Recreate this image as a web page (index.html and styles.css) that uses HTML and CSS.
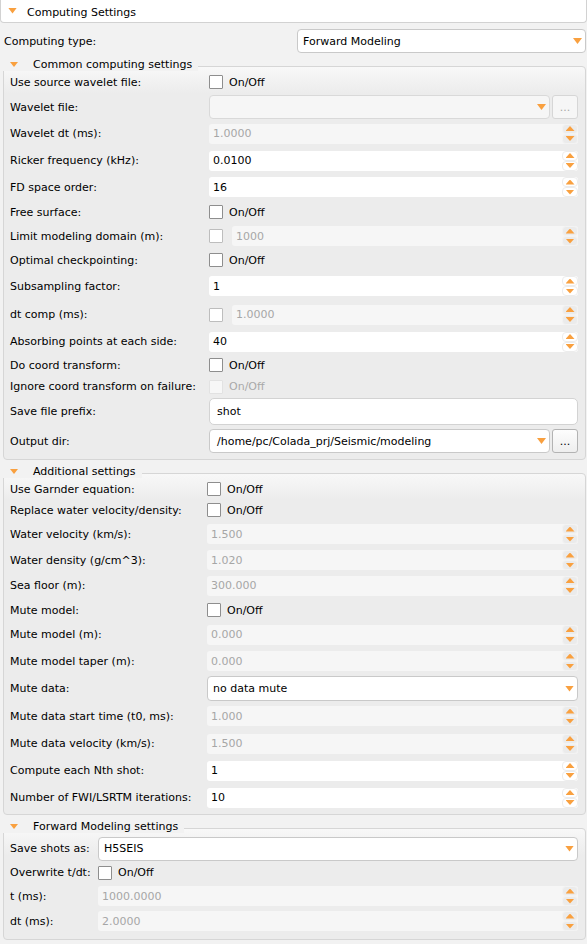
FILE: index.html
```html
<!DOCTYPE html>
<html>
<head>
<meta charset="utf-8">
<title>Computing Settings</title>
<link rel="stylesheet" href="styles.css">
</head>
<body>
<div class="page">
  <div class="header"><span class="tri-h"></span><span class="htext">Computing Settings</span></div>

  <div class="toprow">
    <span class="toplbl">Computing type:</span>
    <div class="combo"><span>Forward Modeling</span></div>
  </div>

  <section class="gbox g-common">
    <div class="gtitle"><span class="tri-g"></span><span>Common computing settings</span></div>
    <div class="rows">
      <div class="row h24"><span class="lbl">Use source wavelet file:</span><div class="fld"><span class="chk"></span><span class="onoff">On/Off</span></div></div>
      <div class="row h26"><span class="lbl">Wavelet file:</span><div class="fld"><div class="combo dis"><span></span></div><div class="btn dis">...</div></div></div>
      <div class="row h27"><span class="lbl">Wavelet dt (ms):</span><div class="fld"><div class="spin dis"><span>1.0000</span><div class="sbs"><i class="sb up"></i><i class="sb dn"></i></div></div></div></div>
      <div class="row h27"><span class="lbl">Ricker frequency (kHz):</span><div class="fld"><div class="spin"><span>0.0100</span><div class="sbs"><i class="sb up"></i><i class="sb dn"></i></div></div></div></div>
      <div class="row h26"><span class="lbl">FD space order:</span><div class="fld"><div class="spin"><span>16</span><div class="sbs"><i class="sb up"></i><i class="sb dn"></i></div></div></div></div>
      <div class="row h24"><span class="lbl">Free surface:</span><div class="fld"><span class="chk"></span><span class="onoff">On/Off</span></div></div>
      <div class="row h24"><span class="lbl">Limit modeling domain (m):</span><div class="fld"><span class="chk dim"></span><div class="spin dis after-chk"><span>1000</span><div class="sbs"><i class="sb up"></i><i class="sb dn"></i></div></div></div></div>
      <div class="row h24"><span class="lbl">Optimal checkpointing:</span><div class="fld"><span class="chk"></span><span class="onoff">On/Off</span></div></div>
      <div class="row h28"><span class="lbl">Subsampling factor:</span><div class="fld"><div class="spin"><span>1</span><div class="sbs"><i class="sb up"></i><i class="sb dn"></i></div></div></div></div>
      <div class="row h29"><span class="lbl">dt comp (ms):</span><div class="fld"><span class="chk dim"></span><div class="spin dis after-chk"><span>1.0000</span><div class="sbs"><i class="sb up"></i><i class="sb dn"></i></div></div></div></div>
      <div class="row h25"><span class="lbl">Absorbing points at each side:</span><div class="fld"><div class="spin"><span>40</span><div class="sbs"><i class="sb up"></i><i class="sb dn"></i></div></div></div></div>
      <div class="row h22"><span class="lbl">Do coord transform:</span><div class="fld"><span class="chk"></span><span class="onoff">On/Off</span></div></div>
      <div class="row h21"><span class="lbl">Ignore coord transform on failure:</span><div class="fld"><span class="chk off"></span><span class="onoff off">On/Off</span></div></div>
      <div class="row h29"><span class="lbl">Save file prefix:</span><div class="fld"><div class="edit"><span>shot</span></div></div></div>
      <div class="row h30"><span class="lbl">Output dir:</span><div class="fld"><div class="combo path"><span>/home/pc/Colada_prj/Seismic/modeling</span></div><div class="btn">...</div></div></div>
    </div>
  </section>

  <section class="gbox g-add">
    <div class="gtitle"><span class="tri-g"></span><span>Additional settings</span></div>
    <div class="rows">
      <div class="row h20"><span class="lbl">Use Garnder equation:</span><div class="fld"><span class="chk"></span><span class="onoff">On/Off</span></div></div>
      <div class="row h22"><span class="lbl">Replace water velocity/density:</span><div class="fld"><span class="chk"></span><span class="onoff">On/Off</span></div></div>
      <div class="row h26"><span class="lbl">Water velocity (km/s):</span><div class="fld"><div class="spin dis"><span>1.500</span><div class="sbs"><i class="sb up"></i><i class="sb dn"></i></div></div></div></div>
      <div class="row h26"><span class="lbl">Water density (g/cm^3):</span><div class="fld"><div class="spin dis"><span>1.020</span><div class="sbs"><i class="sb up"></i><i class="sb dn"></i></div></div></div></div>
      <div class="row h25"><span class="lbl">Sea floor (m):</span><div class="fld"><div class="spin dis"><span>300.000</span><div class="sbs"><i class="sb up"></i><i class="sb dn"></i></div></div></div></div>
      <div class="row h24"><span class="lbl">Mute model:</span><div class="fld"><span class="chk"></span><span class="onoff">On/Off</span></div></div>
      <div class="row h25"><span class="lbl">Mute model (m):</span><div class="fld"><div class="spin dis"><span>0.000</span><div class="sbs"><i class="sb up"></i><i class="sb dn"></i></div></div></div></div>
      <div class="row h28"><span class="lbl">Mute model taper (m):</span><div class="fld"><div class="spin dis"><span>0.000</span><div class="sbs"><i class="sb up"></i><i class="sb dn"></i></div></div></div></div>
      <div class="row h27"><span class="lbl">Mute data:</span><div class="fld"><div class="combo tall"><span>no data mute</span></div></div></div>
      <div class="row h28"><span class="lbl">Mute data start time (t0, ms):</span><div class="fld"><div class="spin dis"><span>1.000</span><div class="sbs"><i class="sb up"></i><i class="sb dn"></i></div></div></div></div>
      <div class="row h27"><span class="lbl">Mute data velocity (km/s):</span><div class="fld"><div class="spin dis"><span>1.500</span><div class="sbs"><i class="sb up"></i><i class="sb dn"></i></div></div></div></div>
      <div class="row h27"><span class="lbl">Compute each Nth shot:</span><div class="fld"><div class="spin"><span>1</span><div class="sbs"><i class="sb up"></i><i class="sb dn"></i></div></div></div></div>
      <div class="row h27"><span class="lbl">Number of FWI/LSRTM iterations:</span><div class="fld"><div class="spin"><span>10</span><div class="sbs"><i class="sb up"></i><i class="sb dn"></i></div></div></div></div>
    </div>
  </section>

  <section class="gbox g-fwd">
    <div class="gtitle"><span class="tri-g"></span><span>Forward Modeling settings</span></div>
    <div class="rows">
      <div class="row h25"><span class="lbl">Save shots as:</span><div class="fld"><div class="combo"><span>H5SEIS</span></div></div></div>
      <div class="row h23"><span class="lbl">Overwrite t/dt:</span><div class="fld"><span class="chk"></span><span class="onoff">On/Off</span></div></div>
      <div class="row h24"><span class="lbl">t (ms):</span><div class="fld"><div class="spin dis"><span>1000.0000</span><div class="sbs"><i class="sb up"></i><i class="sb dn"></i></div></div></div></div>
      <div class="row h26"><span class="lbl">dt (ms):</span><div class="fld"><div class="spin dis"><span>2.0000</span><div class="sbs"><i class="sb up"></i><i class="sb dn"></i></div></div></div></div>
    </div>
  </section>
</div>
</body>
</html>
```

FILE: styles.css
```css
html, body {
  margin: 0;
  padding: 0;
}
body {
  background: #f2f2f2;
  font-family: "DejaVu Sans", "Liberation Sans", sans-serif;
  font-size: 11px;
  color: #000;
  width: 587px;
  height: 944px;
  overflow: hidden;
}
.page {
  width: 587px;
}

/* header */
.header {
  height: 22px;
  box-sizing: content-box;
  background: #fff;
  border: 1px solid #d2d2d2;
  border-top: none;
  border-radius: 0 0 4px 4px;
  display: flex;
  align-items: center;
  padding-left: 7px;
}
.tri-h {
  width: 9px;
  height: 6px;
  background: #f9a03f;
  clip-path: polygon(0 0, 100% 0, 50% 100%);
  margin-top: -1px;
}
.htext {
  margin-left: 10px;
  padding-top: 2px;
}

/* top row */
.toprow {
  display: flex;
  align-items: center;
  margin: 6px 1px 0 4px;
  height: 24px;
}
.toplbl {
  width: 293px;
  flex: none;
}

/* group boxes */
.gbox {
  margin: 13px 1px 0 3px;
  border: 1px solid #d6d6d6;
  border-radius: 4px;
  background: linear-gradient(#f8f8f8 0, #ececec 26px);
  padding: 0 7px 3px 6px;
}
.gtitle {
  height: 12px;
  margin: -8px 0 0 -7px;
  padding: 0 6px 0 7px;
  background: #f2f2f2;
  width: fit-content;
  display: flex;
  align-items: center;
  line-height: 12px;
}
.tri-g {
  width: 8px;
  height: 5px;
  background: #f9a03f;
  clip-path: polygon(0 0, 100% 0, 50% 100%);
  margin-right: 15px;
  margin-top: -1px;
}
.g-common .rows { margin-top: -1px; }
.g-add .rows { margin-top: 1px; }
.g-fwd .rows { margin-top: 3px; }
.g-fwd { padding-bottom: 5px; }

.g-common .lbl { width: 199px; }
.g-add .lbl { width: 197px; }
.g-fwd .lbl { width: 88px; }

.row {
  display: flex;
  align-items: center;
}
.lbl {
  flex: none;
  white-space: nowrap;
}
.fld {
  flex: 1;
  display: flex;
  align-items: center;
  min-width: 0;
}
.h20 { height: 20px; }
.h21 { height: 21px; }
.h22 { height: 22px; }
.h23 { height: 23px; }
.h24 { height: 24px; }
.h25 { height: 25px; }
.h26 { height: 26px; }
.h27 { height: 27px; }
.h28 { height: 28px; }
.h29 { height: 29px; }
.h30 { height: 30px; }

/* checkbox */
.chk {
  flex: none;
  width: 14px;
  height: 14px;
  box-sizing: border-box;
  border: 1px solid #8e8e8e;
  background: #fff;
  border-radius: 1px;
}
.chk.dim {
  border-color: #bdbdbd;
}
.chk.off {
  border-color: #e2e2e2;
  background: #f7f7f7;
}
.onoff {
  margin-left: 6px;
}
.onoff.off {
  color: #a9a9a9;
}

/* combo */
.combo {
  flex: 1;
  min-width: 0;
  height: 24px;
  box-sizing: border-box;
  border: 1px solid #c9c9c9;
  border-radius: 4px;
  background: #fff;
  display: flex;
  align-items: center;
  padding: 0 3px 0 5px;
  white-space: nowrap;
}
.combo::after {
  content: "";
  margin-left: auto;
  flex: none;
  width: 9px;
  height: 6px;
  background: #f9a03f;
  clip-path: polygon(0 0, 100% 0, 50% 100%);
}
.combo.tall {
  height: 25px;
}
.combo.path {
  padding-left: 7px;
}
.combo.dis {
  background: #f6f6f6;
  border-color: #d9d9d9;
}

/* button */
.btn {
  flex: none;
  width: 26px;
  height: 24px;
  box-sizing: border-box;
  margin-left: 2px;
  border: 1px solid #b3b3b3;
  border-radius: 3px;
  background: linear-gradient(#fdfdfd, #eeeeee);
  text-align: center;
  line-height: 24px;
  color: #000;
}
.btn.dis {
  border-color: #d6d6d6;
  background: #f6f6f6;
  color: #a8a8a8;
}

/* line edit */
.edit {
  flex: 1;
  height: 27px;
  box-sizing: border-box;
  border: 1px solid #d3d3d3;
  border-radius: 5px;
  background: #fff;
  display: flex;
  align-items: center;
  padding-left: 7px;
}

/* spin box */
.spin {
  flex: 1;
  min-width: 0;
  height: 20px;
  border-radius: 3px;
  background: #fff;
  display: flex;
  align-items: center;
  padding-left: 4px;
}
.spin.after-chk {
  margin-left: 9px;
  padding-left: 4px;
}
.spin.dis {
  background: #f6f6f6;
  color: #a6a6a6;
}
.sbs {
  margin-left: auto;
  width: 16px;
  height: 20px;
  display: flex;
  flex-direction: column;
}
.sb {
  height: 10px;
  box-sizing: border-box;
  border: 1px solid #ececec;
  border-radius: 4px;
  background: #fff;
  display: flex;
  align-items: center;
  justify-content: center;
}
.spin.dis .sb {
  background: #ebebeb;
  border-color: #f3f3f3;
}
.sb::after {
  content: "";
  width: 9px;
  height: 5px;
  background: #f9a03f;
}
.sb.up::after {
  clip-path: polygon(50% 0, 100% 100%, 0 100%);
}
.sb.dn::after {
  clip-path: polygon(0 0, 100% 0, 50% 100%);
}
```
